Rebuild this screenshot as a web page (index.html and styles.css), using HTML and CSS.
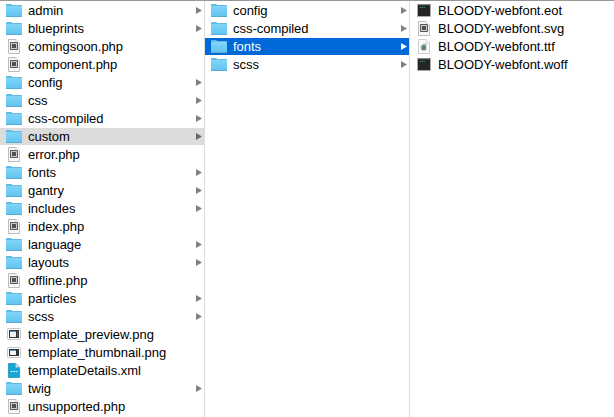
FILE: index.html
```
<!DOCTYPE html>
<html lang="en">
<head>
<meta charset="utf-8">
<title>Files</title>
<link rel="stylesheet" href="styles.css">
</head>
<body>
<svg class="defs" width="0" height="0" aria-hidden="true">
  <defs>
    <linearGradient id="blue" x1="0" y1="0" x2="0" y2="1"><stop offset="0" stop-color="#7dd3f8"/><stop offset="1" stop-color="#63c5f1"/></linearGradient>
    <symbol id="folder" viewBox="0 0 16 17">
      <path d="M0 3Q0 2 1 2H5L6.5 3H15Q16 3 16 4V14H0Z" fill="#5dbbe5"/>
      <path d="M0 5H16V14H0Z" fill="url(#blue)"/>
      <path d="M0 4.5H16" stroke="#83d4f5"/>
      <path d="M0 14.5H16" stroke="#57acd3"/>
    </symbol>
    <symbol id="php" viewBox="0 0 16 17">
      <path d="M2.5 1.5H10L13.5 5V15.5H2.5Z" fill="#f7f7f7" stroke="#bdbdbd"/>
      <path d="M10 1.5V5H13.5" fill="#fff" stroke="#c8c8c8" stroke-width=".8"/>
      <path d="M4.5 4.5H11.5V11.5H4.5Z" fill="#cfcfcf" stroke="#555"/>
      <path d="M6 6H10V10H6Z" fill="#505050"/>
    </symbol>
    <symbol id="png" viewBox="0 0 16 17">
      <rect x="1.5" y="2.5" width="13" height="11" rx="1" fill="#fff" stroke="#c4c4c4"/>
      <path d="M3 4H13V12H3Z" fill="#303436"/>
      <path d="M4 5H10V11H4Z" fill="#f1f3f3"/>
      <path d="M4 5H10V6H4Z" fill="#579db8"/>
      <path d="M11 5H12V11H11Z" fill="#596366"/>
    </symbol>
    <symbol id="thumb" viewBox="0 0 16 17">
      <rect x="1.5" y="3.5" width="13" height="10" rx="1" fill="#fff" stroke="#c4c4c4"/>
      <path d="M3 5H13V12H3Z" fill="#303436"/>
      <path d="M4 7H10V11H4Z" fill="#f1f3f3"/>
      <path d="M4 6H10V7H4Z" fill="#579db8"/>
    </symbol>
    <symbol id="xml" viewBox="0 0 16 17">
      <path d="M2.4 1.5H9.7L13.6 5.3V15.5H2.4Z" fill="#16a5d5" stroke="#268fb2" stroke-width=".8"/>
      <path d="M9.5 1.5V5.5H13.6Z" fill="#d9f2fa" stroke="#65a9bd" stroke-width=".6"/>
      <path d="M4.5 9.5H6M6.6 9.5H9.2M9.8 9.5H11.5" fill="none" stroke="#d9f5ff"/>
    </symbol>
    <symbol id="ttf" viewBox="0 0 16 17">
      <path d="M2.5 1.5H10L13.5 5V15.5H2.5Z" fill="#fafafa" stroke="#cfcfcf"/>
      <path d="M10 1.5V5H13.5" fill="#fff" stroke="#c8c8c8" stroke-width=".8"/>
      <path d="M4.5 8L8 5.5L10.5 6V12L8 13L5 12Z" fill="#a3b3b5"/>
      <path d="M6 8L8 7L9.8 8.5L9.5 12L6 11.5Z" fill="#66797d"/>
    </symbol>
    <symbol id="exec" viewBox="0 0 16 17">
      <path d="M1.5 2.5H14.5V14.5H1.5Z" fill="#222425" stroke="#a9adae"/>
      <path d="M2 3H14" stroke="#4e5152"/>
      <path d="M4 5.5H9" stroke="#3a9a50" stroke-dasharray="1.3 .5"/>
    </symbol>
    <symbol id="arrow" viewBox="0 0 6 7"><path d="M0 0L6 3.5L0 7Z" fill="currentColor"/></symbol>
  </defs>
</svg>
<main class="browser">
  <ul class="column">
    <li class="row"><svg class="icon"><use href="#folder"/></svg><span class="name">admin</span><svg class="arrow"><use href="#arrow"/></svg></li>
    <li class="row"><svg class="icon"><use href="#folder"/></svg><span class="name">blueprints</span><svg class="arrow"><use href="#arrow"/></svg></li>
    <li class="row"><svg class="icon"><use href="#php"/></svg><span class="name">comingsoon.php</span></li>
    <li class="row"><svg class="icon"><use href="#php"/></svg><span class="name">component.php</span></li>
    <li class="row"><svg class="icon"><use href="#folder"/></svg><span class="name">config</span><svg class="arrow"><use href="#arrow"/></svg></li>
    <li class="row"><svg class="icon"><use href="#folder"/></svg><span class="name">css</span><svg class="arrow"><use href="#arrow"/></svg></li>
    <li class="row"><svg class="icon"><use href="#folder"/></svg><span class="name">css-compiled</span><svg class="arrow"><use href="#arrow"/></svg></li>
    <li class="row open"><svg class="icon"><use href="#folder"/></svg><span class="name">custom</span><svg class="arrow"><use href="#arrow"/></svg></li>
    <li class="row"><svg class="icon"><use href="#php"/></svg><span class="name">error.php</span></li>
    <li class="row"><svg class="icon"><use href="#folder"/></svg><span class="name">fonts</span><svg class="arrow"><use href="#arrow"/></svg></li>
    <li class="row"><svg class="icon"><use href="#folder"/></svg><span class="name">gantry</span><svg class="arrow"><use href="#arrow"/></svg></li>
    <li class="row"><svg class="icon"><use href="#folder"/></svg><span class="name">includes</span><svg class="arrow"><use href="#arrow"/></svg></li>
    <li class="row"><svg class="icon"><use href="#php"/></svg><span class="name">index.php</span></li>
    <li class="row"><svg class="icon"><use href="#folder"/></svg><span class="name">language</span><svg class="arrow"><use href="#arrow"/></svg></li>
    <li class="row"><svg class="icon"><use href="#folder"/></svg><span class="name">layouts</span><svg class="arrow"><use href="#arrow"/></svg></li>
    <li class="row"><svg class="icon"><use href="#php"/></svg><span class="name">offline.php</span></li>
    <li class="row"><svg class="icon"><use href="#folder"/></svg><span class="name">particles</span><svg class="arrow"><use href="#arrow"/></svg></li>
    <li class="row"><svg class="icon"><use href="#folder"/></svg><span class="name">scss</span><svg class="arrow"><use href="#arrow"/></svg></li>
    <li class="row"><svg class="icon"><use href="#png"/></svg><span class="name">template_preview.png</span></li>
    <li class="row"><svg class="icon"><use href="#thumb"/></svg><span class="name">template_thumbnail.png</span></li>
    <li class="row"><svg class="icon"><use href="#xml"/></svg><span class="name">templateDetails.xml</span></li>
    <li class="row"><svg class="icon"><use href="#folder"/></svg><span class="name">twig</span><svg class="arrow"><use href="#arrow"/></svg></li>
    <li class="row"><svg class="icon"><use href="#php"/></svg><span class="name">unsupported.php</span></li>
  </ul>
  <ul class="column">
    <li class="row"><svg class="icon"><use href="#folder"/></svg><span class="name">config</span><svg class="arrow"><use href="#arrow"/></svg></li>
    <li class="row"><svg class="icon"><use href="#folder"/></svg><span class="name">css-compiled</span><svg class="arrow"><use href="#arrow"/></svg></li>
    <li class="row selected"><svg class="icon"><use href="#folder"/></svg><span class="name">fonts</span><svg class="arrow"><use href="#arrow"/></svg></li>
    <li class="row"><svg class="icon"><use href="#folder"/></svg><span class="name">scss</span><svg class="arrow"><use href="#arrow"/></svg></li>
  </ul>
  <ul class="column files">
    <li class="row"><svg class="icon"><use href="#exec"/></svg><span class="name">BLOODY-webfont.eot</span></li>
    <li class="row"><svg class="icon"><use href="#php"/></svg><span class="name">BLOODY-webfont.svg</span></li>
    <li class="row"><svg class="icon"><use href="#ttf"/></svg><span class="name">BLOODY-webfont.ttf</span></li>
    <li class="row"><svg class="icon"><use href="#exec"/></svg><span class="name">BLOODY-webfont.woff</span></li>
  </ul>
</main>
</body>
</html>
```
FILE: styles.css
```
* { box-sizing: border-box; }
body {
  margin: 0;
  background: #fff;
  color: #000;
  font-family: "Liberation Sans", Arial, sans-serif;
  font-size: 13px;
  overflow: hidden;
}
.defs { display: block; }
.browser {
  display: grid;
  grid-template-columns: 205px 205px 1fr;
  height: 417px;
  border-top: 1px solid #999;
  overflow: hidden;
}
.column {
  margin: 0;
  padding: 1px 0 0;
  list-style: none;
  border-right: 1px solid #dcdcdc;
}
.files { border-right: 0; }
.row {
  display: flex;
  align-items: center;
  height: 17px;
  margin-bottom: 1px;
  padding: 0 2px 0 6px;
}
.icon { flex: none; width: 16px; height: 17px; }
.name {
  flex: 1;
  margin-left: 6px;
  line-height: 17px;
  white-space: nowrap;
  letter-spacing: -0.03px;
}
.arrow {
  flex: none;
  width: 6px;
  height: 7px;
  color: #808080;
}
.open { background: #dcdcdc; }
.open .arrow { color: #666; }
.selected { background: #0068d9; color: #fff; }
.selected .arrow { color: #fff; }
```
